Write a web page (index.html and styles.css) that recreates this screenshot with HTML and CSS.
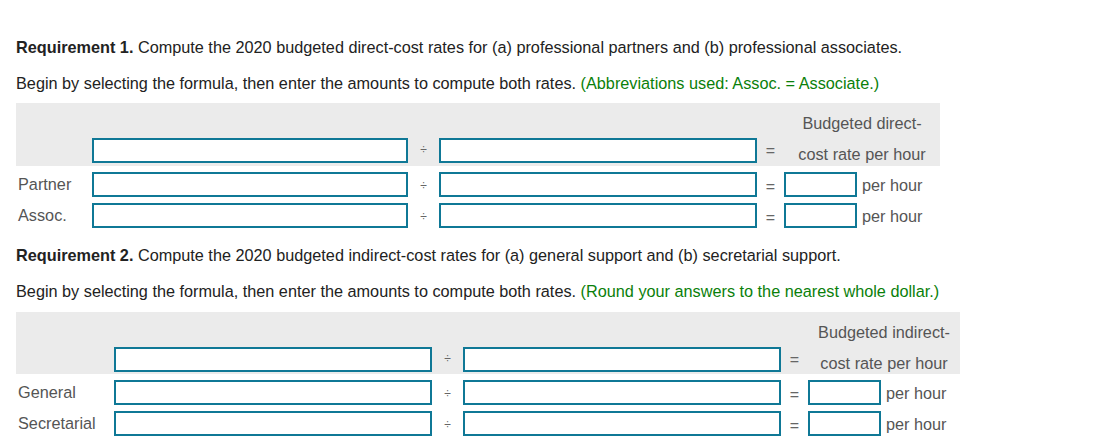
FILE: index.html
```html
<!DOCTYPE html>
<html>
<head>
<meta charset="utf-8">
<link rel="stylesheet" href="styles.css">
</head>
<body>
<div class="page">
  <p class="req"><b>Requirement 1.</b> Compute the 2020 budgeted direct-cost rates for (a) professional partners and (b) professional associates.</p>
  <p class="inst">Begin by selecting the formula, then enter the amounts to compute both rates. <span class="hint">(Abbreviations used: Assoc. = Associate.)</span></p>
  <div class="calc calc-1">
    <div class="row head">
      <span class="label"></span>
      <span class="box"></span>
      <span class="op div">÷</span>
      <span class="box"></span>
      <span class="op eq">=</span>
      <span class="title">Budgeted direct-<br>cost rate per hour</span>
    </div>
    <div class="row">
      <span class="label">Partner</span>
      <span class="box"></span>
      <span class="op div">÷</span>
      <span class="box"></span>
      <span class="op eq">=</span>
      <span class="result"><span class="rbox"></span><span class="unit">per hour</span></span>
    </div>
    <div class="row">
      <span class="label">Assoc.</span>
      <span class="box"></span>
      <span class="op div">÷</span>
      <span class="box"></span>
      <span class="op eq">=</span>
      <span class="result"><span class="rbox"></span><span class="unit">per hour</span></span>
    </div>
  </div>

  <p class="req req-2"><b>Requirement 2.</b> Compute the 2020 budgeted indirect-cost rates for (a) general support and (b) secretarial support.</p>
  <p class="inst inst-2">Begin by selecting the formula, then enter the amounts to compute both rates. <span class="hint">(Round your answers to the nearest whole dollar.)</span></p>
  <div class="calc calc-2">
    <div class="row head">
      <span class="label"></span>
      <span class="box"></span>
      <span class="op div">÷</span>
      <span class="box"></span>
      <span class="op eq">=</span>
      <span class="title">Budgeted indirect-<br>cost rate per hour</span>
    </div>
    <div class="row">
      <span class="label">General</span>
      <span class="box"></span>
      <span class="op div">÷</span>
      <span class="box"></span>
      <span class="op eq">=</span>
      <span class="result"><span class="rbox"></span><span class="unit">per hour</span></span>
    </div>
    <div class="row">
      <span class="label">Secretarial</span>
      <span class="box"></span>
      <span class="op div">÷</span>
      <span class="box"></span>
      <span class="op eq">=</span>
      <span class="result"><span class="rbox"></span><span class="unit">per hour</span></span>
    </div>
  </div>
</div>
</body>
</html>
```

FILE: styles.css
```css
html, body {
  margin: 0;
  padding: 0;
  background: #ffffff;
}

.page {
  padding: 38px 16px 0 16px;
  font-family: "Liberation Sans", Arial, sans-serif;
  font-size: 16.25px;
  color: #222222;
}

.req, .inst {
  margin: 0 0 18px 0;
  line-height: 18px;
}

.req-2 {
  margin-top: 18px;
}

.inst {
  margin-bottom: 11px;
}

.inst-2 {
  margin-bottom: 12px;
}

.hint {
  color: #0a800a;
}

.calc-1 {
  --cols: 76px 316px 31px 318px 27px 156px;
  --head-h: 63px;
}

.calc-2 {
  --cols: 98px 318px 31px 318px 27px 152px;
  --head-h: 62px;
}

.row {
  display: grid;
  grid-template-columns: var(--cols);
  width: max-content;
  height: 31px;
  box-sizing: border-box;
  padding: 4px 0 2px 0;
  align-items: center;
}

.row.head {
  background: #ebebeb;
  height: var(--head-h);
  padding: 0 0 2px 0;
  align-items: end;
}

.calc-1 .row.head {
  padding-bottom: 3px;
}

.label {
  color: #555555;
  padding-left: 2px;
  line-height: 25px;
}

.box {
  display: block;
  height: 25px;
  box-sizing: border-box;
  border: 2px solid #0f7896;
  background: #ffffff;
}

.op {
  color: #666666;
  text-align: center;
  line-height: 25px;
}

.div {
  font-size: 12px;
  padding-top: 4px;
}

.eq {
  font-size: 16px;
  padding-top: 3px;
}

.row.head .eq {
  padding-top: 6px;
}

.title {
  color: #555555;
  text-align: center;
  line-height: 31px;
  margin-bottom: -7px;
  align-self: end;
}

.result {
  display: flex;
  align-items: center;
  gap: 5px;
}

.rbox {
  display: block;
  width: 73px;
  height: 25px;
  box-sizing: border-box;
  border: 2px solid #0f7896;
  background: #ffffff;
}

.unit {
  color: #555555;
  padding-top: 1px;
}
```
